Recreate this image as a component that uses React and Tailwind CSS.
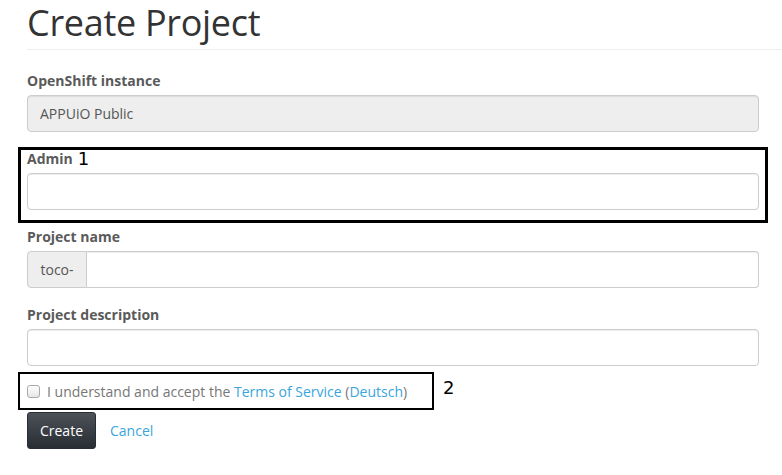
import React from 'react'

const font = { fontFamily: '"Open Sans", "Liberation Sans", sans-serif' }

function Field({ label, children }) {
  return (
    <div className="relative mt-[16px] first:mt-0">
      <label className="flex h-[20px] items-center text-[14px] font-bold text-[#5a5a5a]">{label}</label>
      <div className="mt-[5px]">{children}</div>
    </div>
  )
}

export default function App() {
  return (
    <div className="min-h-[475px] bg-white pl-[27px]" style={font}>
      <h1 className="pt-[1px] text-[36px] leading-[43px] font-normal tracking-[-0.3px] text-[#333]">Create Project</h1>
      <div className="mt-[5px] border-t border-[#eee]" />

      <form className="mr-[23px] pt-[20px]">
        <Field label="OpenShift instance">
          <div className="flex h-[37px] items-center rounded-[4px] border border-[#ccc] bg-[#eee] px-[12px] text-[14px] text-[#555] shadow-[inset_0_1px_1px_rgba(0,0,0,0.075)]">
            APPUiO Public
          </div>
        </Field>

        <div className="relative mt-[16px]">
          {/* annotation box 1 */}
          <div className="pointer-events-none absolute -top-[1px] -right-[9px] -bottom-[13px] -left-[9px] border-[3px] border-black" />
          <label className="flex h-[20px] items-center text-[14px] font-bold text-[#5a5a5a]">
            Admin
            <span
              className="ml-[5px] text-[18px] font-normal text-black"
              style={{ fontFamily: '"DejaVu Sans", sans-serif' }}
            >
              1
            </span>
          </label>
          <input
            type="text"
            className="mt-[5px] block h-[37px] w-full rounded-[4px] border border-[#ccc] bg-white px-[12px] text-[14px] shadow-[inset_0_1px_1px_rgba(0,0,0,0.075)] outline-none"
          />
        </div>

        <Field label="Project name">
          <div className="flex h-[37px]">
            <span className="flex w-[60px] items-center justify-center rounded-l-[4px] border border-[#ccc] bg-[#eee] text-[14px] text-[#555]">
              toco-
            </span>
            <input
              type="text"
              className="block h-full flex-1 rounded-r-[4px] border border-l-0 border-[#ccc] bg-white px-[12px] text-[14px] shadow-[inset_0_1px_1px_rgba(0,0,0,0.075)] outline-none"
            />
          </div>
        </Field>

        <Field label="Project description">
          <input
            type="text"
            className="block h-[37px] w-full rounded-[4px] border border-[#ccc] bg-white px-[12px] text-[14px] shadow-[inset_0_1px_1px_rgba(0,0,0,0.075)] outline-none"
          />
        </Field>

        <div className="relative mt-[6px] flex h-[38px] w-[407px] items-center">
          {/* annotation box 2 */}
          <div className="pointer-events-none absolute top-0 -left-[9px] h-[38px] w-[416px] border-[2px] border-black" />
          <span
            className="absolute top-[2px] left-[416px] text-[18px] text-black"
            style={{ fontFamily: '"DejaVu Sans", sans-serif' }}
          >
            2
          </span>
          <span className="mt-[1px] h-[13px] w-[13px] rounded-[3px] border border-[#aaa] bg-gradient-to-b from-white to-[#e6e6e6]" />
          <span className="ml-[7px] text-[14px] text-[#777] whitespace-nowrap">
            I understand and accept the <a className="text-[#39a5dc]">Terms of Service</a> (
            <a className="text-[#39a5dc]">Deutsch</a>)
          </span>
        </div>

        <div className="mt-[2px] flex items-center">
          <button
            type="button"
            className="h-[37px] w-[69px] rounded-[3px] border border-[#292e34] bg-gradient-to-b from-[#4d5258] to-[#292e34] text-[14px] text-white"
          >
            Create
          </button>
          <a className="ml-[14px] text-[14px] text-[#39a5dc]">Cancel</a>
        </div>
      </form>
    </div>
  )
}
